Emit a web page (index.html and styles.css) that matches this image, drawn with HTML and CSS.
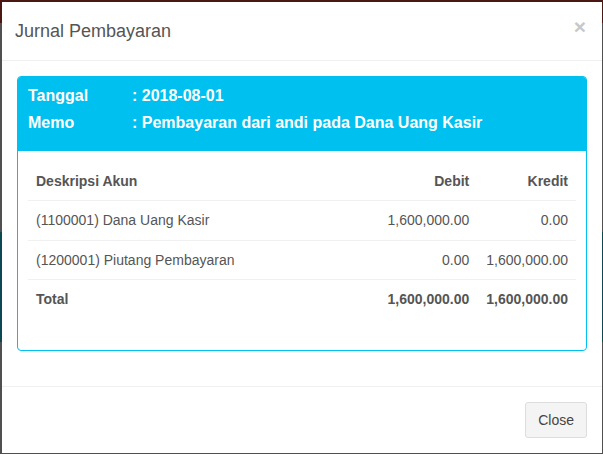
FILE: index.html
```html
<!DOCTYPE html>
<html lang="id">
<head>
<meta charset="utf-8">
<title>Jurnal Pembayaran</title>
<link rel="stylesheet" href="styles.css">
</head>
<body>
<div class="modal">
  <div class="modal-header">
    <h4 class="modal-title">Jurnal Pembayaran</h4>
    <button class="close" type="button" aria-label="Close">&times;</button>
  </div>
  <div class="modal-body">
    <div class="panel">
      <div class="panel-heading">
        <div class="info-row"><span class="info-label">Tanggal</span><span>: 2018-08-01</span></div>
        <div class="info-row"><span class="info-label">Memo</span><span>: Pembayaran dari andi pada Dana Uang Kasir</span></div>
      </div>
      <div class="panel-body">
        <table class="table">
          <thead>
            <tr><th>Deskripsi Akun</th><th class="num">Debit</th><th class="num">Kredit</th></tr>
          </thead>
          <tbody>
            <tr><td>(1100001) Dana Uang Kasir</td><td class="num">1,600,000.00</td><td class="num">0.00</td></tr>
            <tr><td>(1200001) Piutang Pembayaran</td><td class="num">0.00</td><td class="num">1,600,000.00</td></tr>
            <tr class="total"><th>Total</th><th class="num">1,600,000.00</th><th class="num">1,600,000.00</th></tr>
          </tbody>
        </table>
      </div>
    </div>
  </div>
  <div class="modal-footer">
    <button class="btn" type="button">Close</button>
  </div>
</div>
</body>
</html>
```

FILE: styles.css
```css
* { box-sizing: border-box; }
html, body { height: 100%; }
body {
  margin: 0;
  font-family: "Liberation Sans", Arial, sans-serif;
  font-size: 14px;
  line-height: 1.42857;
  color: #555;
  background:
    linear-gradient(to bottom,
      #4a1712 0, #4a1712 23px,
      #505050 23px, #505050 232px,
      #0b4852 232px, #0b4852 342px,
      #505050 342px, #505050 100%);
  padding: 2px 1px 0 2px;
}
.modal {
  width: 600px;
  background: #fff;
}
.modal-header {
  display: flex;
  align-items: flex-start;
  justify-content: space-between;
  padding: 16px 15px 16px 13px;
  border-bottom: 1px solid #f0f0f0;
}
.modal-title {
  margin: 0;
  font-size: 18px;
  font-weight: normal;
  line-height: 26px;
  color: #555;
}
.close {
  border: 0;
  background: transparent;
  padding: 0;
  margin-top: -2px;
  margin-right: 1px;
  font-family: "Liberation Sans", Arial, sans-serif;
  font-size: 21px;
  font-weight: bold;
  line-height: 1;
  color: #c8c8c8;
  cursor: pointer;
}
.modal-body {
  padding: 15px;
}
.panel {
  border: 1px solid #00c0ef;
  border-radius: 4px;
  margin-bottom: 20px;
  overflow: hidden;
}
.panel-heading {
  background: #00c0ef;
  color: #fff;
  font-weight: bold;
  font-size: 16px;
  padding: 5px 10px 15px 10px;
}
.info-row {
  display: flex;
  line-height: 27px;
}
.info-label {
  width: 104px;
}
.panel-body {
  padding: 10px;
}
.table {
  width: 100%;
  border-collapse: collapse;
  margin-bottom: 21px;
}
.table th, .table td {
  padding: 9.25px 8px;
  line-height: 20px;
  text-align: left;
  color: #555;
}
.table thead th { padding: 9.5px 8px; }
.table th { font-weight: bold; }
.table thead th { border-bottom: 1px solid #f0f0f0; }
.table tbody tr + tr td, .table tbody tr + tr th { border-top: 1px solid #f0f0f0; }
.table .num {
  text-align: right;
  width: 1%;
  white-space: nowrap;
  padding-right: 8px;
}
.table .num:not(:last-child) { padding-right: 9px; padding-left: 7px; }
.modal-footer {
  display: flex;
  justify-content: flex-end;
  padding: 15px;
  border-top: 1px solid #f0f0f0;
}
.btn {
  font-family: "Liberation Sans", Arial, sans-serif;
  font-size: 14px;
  line-height: 20px;
  padding: 7px 12px;
  background: #f4f4f4;
  color: #444;
  border: 1px solid #ddd;
  border-radius: 3px;
  cursor: pointer;
}
```
